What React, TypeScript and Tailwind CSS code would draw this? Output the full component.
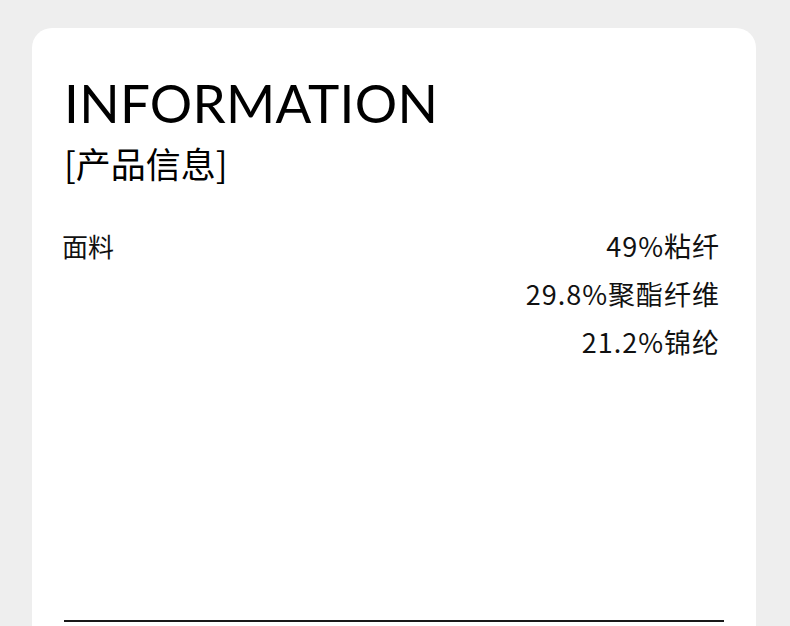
import React from "react";

const FABRIC = ["49%粘纤", "29.8%聚酯纤维", "21.2%锦纶"];

const cjk = "font-['Noto_Sans_CJK_SC',sans-serif]";

export default function App() {
  return (
    <div className="h-[626px] overflow-hidden bg-[#eeeeee] pl-[32px] pr-[34px] pt-[28px]">
      <div className="rounded-t-[20px] bg-white pl-[32px] pr-[32px] pt-[48px] pb-[40px]">
        {/* Header */}
        <h1 className="font-['Lato',sans-serif] text-[53px] leading-[53px] font-normal tracking-[0.3px] text-black">
          INFORMATION
        </h1>
        <p className={`${cjk} mt-[16px] text-[35px] leading-[35px] text-black`}>[产品信息]</p>

        {/* Fabric */}
        <div className={`${cjk} mt-[42px] flex justify-between leading-[48px] text-[#111]`}>
          <span className="-ml-[2px] text-[26px]">面料</span>
          <div className="flex flex-col items-end pr-[4px] text-[27px] tracking-[1px]">
            {FABRIC.map(f => (
              <span key={f}>{f}</span>
            ))}
          </div>
        </div>

        <div className="mt-[254px] h-[2px] bg-[#1a1a1a]" />
      </div>
    </div>
  );
}
